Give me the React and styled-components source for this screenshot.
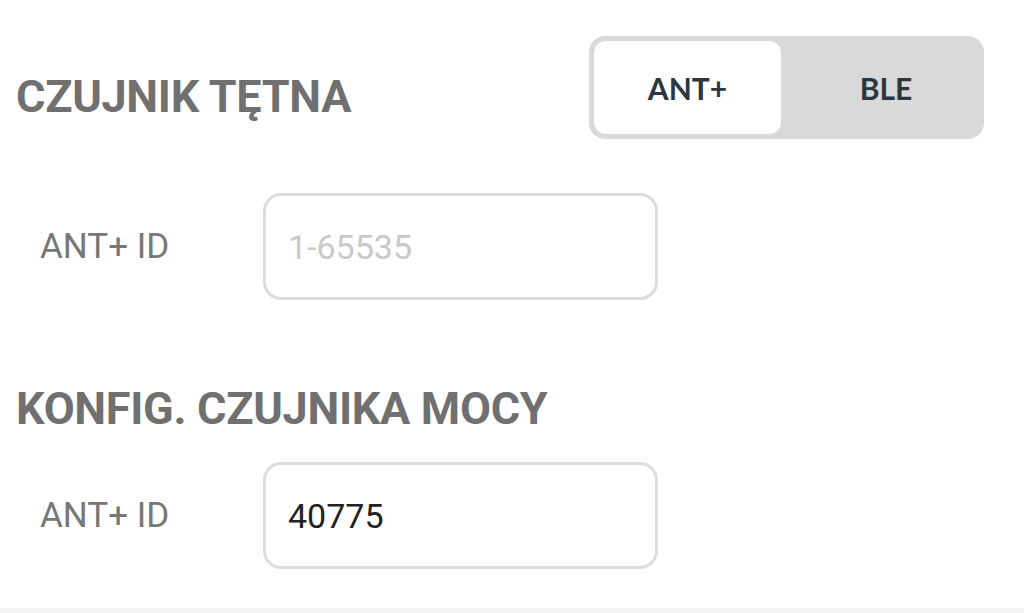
import React from "react";
import styled, { createGlobalStyle } from "styled-components";

const Global = createGlobalStyle`
  html, body { margin: 0; padding: 0; background: #ffffff; }
  body { font-family: Roboto, "Liberation Sans", sans-serif; }
  * { box-sizing: border-box; }
`;

const Page = styled.div`
  width: 1024px;
  height: 613px;
  display: flex;
  flex-direction: column;
  background: #ffffff;
  overflow: hidden;
`;

const Content = styled.div`
  flex: 1;
  padding: 36px 40px 0 16px;
  display: flex;
  flex-direction: column;
`;

const HeaderRow = styled.div`
  display: flex;
  justify-content: space-between;
  align-items: flex-start;
  height: 103px;
`;

const Heading = styled.h2`
  margin: ${(p) => p.$mt || 0}px 0 0 0;
  font-family: Roboto, "Liberation Sans", sans-serif;
  font-weight: 700;
  font-size: 45px;
  line-height: 45px;
  color: #707070;
  letter-spacing: -0.3px;
`;

const Toggle = styled.div`
  width: 395px;
  height: 103px;
  padding: 5px;
  border-radius: 16px;
  background: #d9d9d9;
  display: grid;
  grid-template-columns: 187px 1fr;
`;

const Segment = styled.div`
  display: flex;
  align-items: center;
  justify-content: center;
  padding-left: ${(p) => (p.$active ? 0 : 12)}px;
  border-radius: 12px;
  background: ${(p) => (p.$active ? "#ffffff" : "transparent")};
  font-family: Lato, "Open Sans", sans-serif;
  font-weight: 700;
  font-size: 30px;
  color: #2b3640;
`;

const FieldRow = styled.div`
  display: flex;
  align-items: center;
  margin-top: ${(p) => p.$mt}px;
  padding-left: 24px;
`;

const Label = styled.label`
  width: 223px;
  font-family: Roboto, "Liberation Sans", sans-serif;
  font-weight: 400;
  font-size: 35px;
  color: #777777;
`;

const Field = styled.input`
  width: 395px;
  height: 107px;
  border: 3px solid #dcdcdc;
  border-radius: 18px;
  padding: 0 0 0 22px;
  font-family: Roboto, "Liberation Sans", sans-serif;
  font-size: 34px;
  color: #222222;
  background: #ffffff;
  outline: none;
  &::placeholder {
    color: #c9c9c9;
  }
`;

const BottomBar = styled.div`
  height: 5px;
  background: #f2f2f2;
`;

export default function App() {
  return (
    <Page>
      <Global />
      <Content>
        <HeaderRow>
          <Heading $mt={38}>CZUJNIK TĘTNA</Heading>
          <Toggle>
            <Segment $active>ANT+</Segment>
            <Segment>BLE</Segment>
          </Toggle>
        </HeaderRow>
        <FieldRow $mt={54}>
          <Label>ANT+ ID</Label>
          <Field placeholder="1-65535" readOnly />
        </FieldRow>
        <Heading $mt={86}>KONFIG. CZUJNIKA MOCY</Heading>
        <FieldRow $mt={31}>
          <Label>ANT+ ID</Label>
          <Field defaultValue="40775" readOnly />
        </FieldRow>
      </Content>
      <BottomBar />
    </Page>
  );
}
